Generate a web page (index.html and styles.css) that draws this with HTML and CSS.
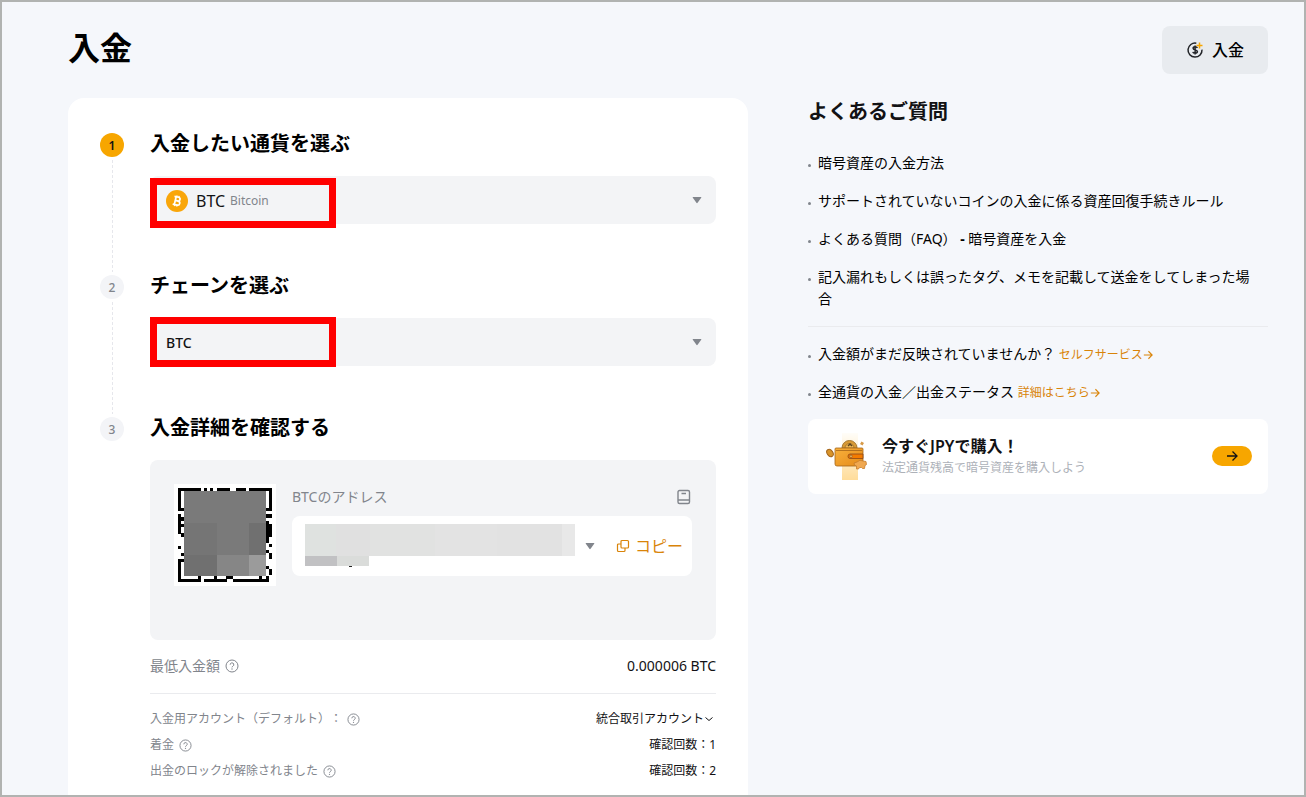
FILE: index.html
```html
<!DOCTYPE html>
<html lang="ja">
<head>
<meta charset="utf-8">
<title>入金</title>
<meta name="viewport" content="width=device-width, initial-scale=1">
<link rel="stylesheet" href="styles.css">
</head>
<body>
<svg class="defs" aria-hidden="true">
  <symbol id="help" viewBox="0 0 14 14"><g fill="none" stroke="currentColor"><circle cx="7" cy="7" r="6"/><path d="M5.2 5.7a1.8 1.8 0 1 1 2.7 1.5c-.6.4-.9.6-.9 1.2"/></g><circle cx="7" cy="10" r=".7" fill="currentColor"/></symbol>
  <symbol id="arrow" viewBox="0 0 12 12"><path d="M1 6h10M6.500 1.500 11 6l-4.500 4.500" fill="none" stroke="currentColor" stroke-width="1.300"/></symbol>
  <symbol id="caret" viewBox="0 0 10 8"><path d="M1.200 1h7.600q.9 0 .4.800L5.600 6.800q-.6.700-1.200 0L.8 1.800Q.3 1 1.200 1Z" fill="currentColor"/></symbol>
</svg>
<header class="header">
  <h1 class="title">入金</h1>
  <button class="deposit" type="button">
    <svg width="18" height="18" viewBox="0 0 18 18" fill="none" stroke="#222428" stroke-width="1.500"><path d="M10.300 2.200A7 7 0 1 0 16 8.600"/><path d="M11.300 6.900C11 6 10.200 5.800 9.100 5.800c-1.300 0-2 .6-2 1.500 0 2.200 4.300 1 4.300 3.300 0 1-.9 1.600-2.200 1.600S7 11.700 6.800 10.800M9.100 4.500v9"/><path d="M13.500 1.500v6M10.500 4.500h6" stroke="#f7a600"/></svg>
    <span>入金</span>
  </button>
</header>
<div class="layout">
  <main class="card">
    <section class="step">
      <div class="rail"><span class="num num-on">1</span></div>
      <div class="body">
        <h2 class="heading"><label for="coin">入金したい通貨を選ぶ</label></h2>
        <div class="field">
          <svg width="22" height="22" viewBox="0 0 22 22"><circle cx="11" cy="11" r="11" fill="#f9a60a"/><g transform="rotate(13 11 11)" fill="none" stroke="#fff" stroke-width="1.700"><path d="M7.500 7h4.200a1.900 1.900 0 0 1 0 3.800H9.200h2.900a2.100 2.100 0 0 1 0 4.200H7.500M9.200 7v8"/><path d="M9.800 5.400v2M12 5.400v2M9.800 14.600v2M12 14.600v2" stroke-width="1.200"/></g></svg>
          <select class="select coin" id="coin"><option>BTC</option></select>
          <span class="coin-name">Bitcoin</span>
          <svg class="caret" width="10" height="8"><use href="#caret"/></svg>
          <span class="mark mark-coin"></span>
        </div>
      </div>
    </section>
    <section class="step">
      <div class="rail"><span class="num">2</span></div>
      <div class="body">
        <h2 class="heading"><label for="chain">チェーンを選ぶ</label></h2>
        <div class="field">
          <select class="select chain" id="chain"><option>BTC</option></select>
          <svg class="caret" width="10" height="8"><use href="#caret"/></svg>
          <span class="mark mark-chain"></span>
        </div>
      </div>
    </section>
    <section class="step last">
      <div class="rail"><span class="num">3</span></div>
      <div class="body">
        <h2 class="heading">入金詳細を確認する</h2>
        <div class="panel">
          <svg width="102" height="102" viewBox="0 0 102 102" shape-rendering="crispEdges">
            <path fill="#fff" d="M0 0h102v102H0z"/>
            <path d="M4 4h23v3H4zM30 4h3v3h-3zM36 4h3v3h-3zM43 4h13v3H43zM62 4h10v3H62zM75 4h23v3H75zM4 4h3v23H4zM4 24h6v3H4zM95 4h3v23h-3zM91 24h7v3h-7z"/>
            <path d="M4 30h3v20H4zM7 33h3v4H7zM7 40h3v3H7zM7 49h3v4H7zM4 62h3v3H4zM7 69h3v3H7zM4 75h3v23H4zM4 75h6v3H4zM4 95h23v3H4zM24 92h3v3h-3zM30 95h23v3H30zM40 92h3v3h-3zM52 92h7v3h-7zM59 95h36v3H59zM85 92h3v3h-3zM92 92h3v3h-3z"/>
            <path d="M92 30h6v4h-6zM92 37h3v3h-3zM92 40h6v13h-6zM92 53h3v6h-3zM95 60h3v3h-3zM92 66h3v3h-3zM95 69h3v6h-3zM92 82h3v3h-3zM95 85h3v6h-3z"/>
            <path fill="#7a7a7a" d="M10 7h82v85H10z"/><path fill="#757575" d="M10 39h33v32H10z"/><path fill="#707070" d="M75 39h17v32H75zM10 71h33v21H10z"/><path fill="#868686" d="M43 71h32v21H43z"/><path fill="#9b9b9b" d="M75 71h17v21H75z"/>
          </svg>
          <div class="address">
            <div class="address-head">
              <span>BTCのアドレス</span>
              <button class="plain" type="button" aria-label="アドレス帳"><svg width="16" height="16" viewBox="0 0 16 16" fill="none" stroke="#81858c" stroke-width="1.400"><rect x="2" y="1.500" width="11.500" height="13" rx="1.500"/><path d="M2 11h11.500M5.500 4.500h4.500"/></svg></button>
            </div>
            <div class="address-box">
              <svg class="masked" width="270" height="44" viewBox="0 1 270 44" shape-rendering="crispEdges"><path fill="#e3e3e3" d="M0 1h257v32H0z"/><path fill="#dfe2e0" d="M0 1h31v32H0z"/><path fill="#e0e0e0" d="M31 1h34v32H31z"/><path fill="#e1e2e1" d="M65 1h65v32H65z"/><path fill="#e2e2e2" d="M192 1h65v32h-65z"/><path fill="#e8e8e8" d="M257 1h13v32h-13z"/><path fill="#c1c1c3" d="M0 33h32v10H0z"/><path fill="#dadcda" d="M32 33h32v10H32z"/><path fill="#222" d="M44 43h3v1h-3z"/></svg>
              <button class="plain" type="button" aria-label="アドレスを選択"><svg class="caret" width="10" height="8"><use href="#caret"/></svg></button>
              <button class="copy" type="button"><svg width="14" height="14" viewBox="0 0 14 14" fill="none" stroke="currentColor" stroke-width="1.200"><rect x="5" y="1.500" width="7.500" height="7.500" rx="1"/><path d="M5 5H2.500q-1 0-1 1v5.500q0 1 1 1H8q1 0 1-1V9"/></svg><span>コピー</span></button>
            </div>
          </div>
        </div>
        <div class="row minimum"><span class="term">最低入金額<svg width="14" height="14"><use href="#help"/></svg></span><span>0.000006 BTC</span></div>
        <div class="details">
          <div class="row"><span class="term">入金用アカウント（デフォルト）：<svg width="13" height="13"><use href="#help"/></svg></span><button class="account" type="button">統合取引アカウント<svg width="10" height="10" viewBox="0 0 10 10" fill="none" stroke="currentColor"><path d="m1.500 3.500 3.500 3 3.500-3"/></svg></button></div>
          <div class="row"><span class="term">着金<svg width="13" height="13"><use href="#help"/></svg></span><span>確認回数：1</span></div>
          <div class="row"><span class="term">出金のロックが解除されました<svg width="13" height="13"><use href="#help"/></svg></span><span>確認回数：2</span></div>
        </div>
      </div>
    </section>
  </main>
  <aside class="aside">
    <h2 class="heading faq">よくあるご質問</h2>
    <ul class="list">
      <li><a href="#">暗号資産の入金方法</a></li>
      <li><a href="#">サポートされていないコインの入金に係る資産回復手続きルール</a></li>
      <li><a href="#">よくある質問（FAQ） <b>-</b> 暗号資産を入金</a></li>
      <li><a href="#">記入漏れもしくは誤ったタグ、メモを記載して送金をしてしまった場合</a></li>
    </ul>
    <ul class="list support">
      <li>入金額がまだ反映されていませんか？ <a class="more" href="#">セルフサービス<svg width="10" height="10"><use href="#arrow"/></svg></a></li>
      <li>全通貨の入金／出金ステータス <a class="more" href="#">詳細はこちら<svg width="10" height="10"><use href="#arrow"/></svg></a></li>
    </ul>
    <div class="promo">
      <svg width="42" height="48" viewBox="0 0 42 48">
        <defs><linearGradient id="beam" x1="0" y1="0" x2="0" y2="1"><stop stop-color="#fffdf8"/><stop offset="1" stop-color="#ffdc9a"/></linearGradient><linearGradient id="gold" x1="0" y1="0" x2="1" y2="1"><stop stop-color="#f8b13c"/><stop offset="1" stop-color="#e58a1a"/></linearGradient></defs>
        <path d="M16 1h16v47H16z" fill="url(#beam)"/>
        <path d="M16 16a7.500 7.500 0 0 1 15 0Z" fill="#d99a35" stroke="#a5782f"/><path d="M19 16a4 4 0 0 1 9 0Z" fill="#efb754" stroke="#a5782f"/><path d="m22 14 2-2 2 2" fill="none" stroke="#5b431c" stroke-width="1.500"/>
        <path d="M10 16h26q1 0 1 1v15q0 2-2 2H11q-2 0-2-2V17q0-1 1-1Z" fill="url(#gold)" stroke="#a56419" stroke-width=".8"/><path d="M10 18.500h26" stroke="#a56419" stroke-width=".8"/>
        <path d="M24 22h13v4.500H24q-2 0-2-2.200t2-2.300Z" fill="#f47b00" stroke="#894819" stroke-width=".8"/><circle cx="25" cy="24.300" r="1.200" fill="#ffd178" stroke="#704319" stroke-width=".6"/>
        <ellipse cx="4" cy="21" rx="2.800" ry="4" fill="#d9942a" stroke="#a4651a" transform="rotate(-35 4 21)"/>
        <path d="m34 12 1.500-2.500L38 11l-1.500 2.500Z" fill="#d79a48"/>
        <path d="m28 31 3-1q3-3 6-1l3 .5.5 3-1.500 1-.5 3h-2l-1-1h-2l-1 1.500h-2V34l-2-1Z" fill="#f0a850" stroke="#c67d2c" stroke-width=".8"/>
      </svg>
      <div class="promo-text"><strong>今すぐJPYで購入！</strong><span>法定通貨残高で暗号資産を購入しよう</span></div>
      <button class="go" type="button" aria-label="購入する"><svg width="12" height="12"><use href="#arrow"/></svg></button>
    </div>
  </aside>
</div>
</body>
</html>
```
FILE: styles.css
```css
* { box-sizing: border-box; }
body {
  margin: 0;
  min-height: 100vh;
  display: flex;
  flex-direction: column;
  gap: 24px;
  padding: 24px 36px 0 66px;
  border: 2px solid #b1b3b1;
  background: #f5f7fb;
  color: #121214;
  font: 14px/22px "Noto Sans", "Noto Sans CJK JP", sans-serif;
  text-spacing-trim: space-all;
}
h1, h2, ul { margin: 0; padding: 0; }
button, select { font: inherit; color: inherit; border: 0; padding: 0; background: none; cursor: pointer; }
a { color: inherit; text-decoration: none; }
svg { flex: none; display: block; }
.defs { position: absolute; width: 0; height: 0; }
.header { display: flex; justify-content: space-between; align-items: flex-start; }
.title { font-size: 32px; line-height: 44px; color: #000; }
.deposit {
  display: flex; align-items: center; gap: 8px;
  height: 48px; padding: 0 24px;
  border-radius: 8px; background: #e8ebef;
  font-size: 16px; font-weight: 500; color: #000;
}
.layout { flex: 1; display: grid; grid-template-columns: minmax(0, 1fr) 460px; gap: 60px; }
.card { padding: 32px 32px 11px; border-radius: 16px 16px 0 0; background: #fff; }
.step { display: grid; grid-template-columns: 24px minmax(0, 1fr); gap: 26px; }
.body { padding-bottom: 48px; }
.last .body { padding-bottom: 0; }
.rail { display: flex; flex-direction: column; align-items: center; gap: 3px; padding-top: 3px; }
.rail::after {
  content: ""; flex: 1; width: 1px;
  background: repeating-linear-gradient(#e6e7ec 0 3px, transparent 3px 5px);
}
.last .rail::after { display: none; }
.num {
  display: grid; place-items: center;
  width: 24px; height: 24px; padding-top: 2px; border-radius: 50%;
  background: #f3f4f7; color: #81858c;
  font-size: 12px; font-weight: 500;
}
.num-on { background: #f7a600; color: #121214; font-weight: 600; }
.heading { margin-bottom: 18px; font-size: 20px; line-height: 28px; font-weight: 600; color: #000; }
.field {
  position: relative;
  display: flex; align-items: center;
  height: 48px; padding: 2px 14px 0 16px;
  border-radius: 8px; background: #f3f4f6;
}
.select { appearance: none; outline: 0; color: #121214; }
.coin { width: 30px; margin: 0 4px 0 8px; font-size: 16px; }
.chain { flex: 1; font-weight: 500; }
.coin-name { flex: 1; font-size: 12px; color: #81858c; }
.caret { color: #81858c; }
.field .caret { margin-bottom: 2px; }
.mark { position: absolute; left: 0; width: 186px; height: 50px; border: 7px solid #f00; pointer-events: none; }
.mark-coin { top: 2px; }
.mark-chain { top: -1px; }
.panel { display: flex; align-items: flex-start; gap: 16px; min-height: 180px; padding: 24px; border-radius: 8px; background: #f3f4f6; }
.address { flex: 1; min-width: 0; }
.address-head { display: flex; align-items: center; justify-content: space-between; height: 24px; margin-bottom: 8px; padding-top: 2px; color: #81858c; }
.address-box { display: flex; align-items: center; height: 60px; padding: 0 9px 0 13px; border-radius: 8px; background: #fff; }
.masked { margin-right: 10px; }
.copy { display: flex; align-items: center; gap: 5px; margin-left: auto; color: #d98409; font-size: 16px; }
.row { display: flex; justify-content: space-between; align-items: center; line-height: 26px; }
.term { display: flex; align-items: center; color: #81858c; gap: 5px; }
.minimum { padding: 13px 0 14px; border-bottom: 1px solid #eaebee; }
.details { padding-top: 12px; font-size: 12px; }
.account { display: flex; align-items: center; padding-right: 2px; }
.faq { margin-bottom: 26px; color: #121214; }
.list { display: grid; gap: 16px; list-style: none; }
.list li { position: relative; padding: 0 10px; color: #000; }
.list li::before {
  content: ""; position: absolute; left: 0; top: 12px;
  width: 3px; height: 3px; border-radius: 50%; background: #81858c;
}
.support { margin-top: 16px; padding: 16px 0; border-top: 1px solid #eaebee; }
.more { display: inline-flex; align-items: center; color: #d98409; font-size: 12px; line-height: 18px; }
.promo { display: flex; align-items: center; padding: 13px 16px 14px 18px; border-radius: 8px; background: #fff; }
.promo-text { flex: 1; display: grid; margin-left: 14px; font-size: 12px; line-height: 20px; color: #adb1b8; }
.promo-text strong { font-size: 16px; line-height: 24px; font-weight: 600; color: #121214; }
.go { display: grid; place-items: center; width: 40px; height: 20px; border-radius: 10px; background: #f7a600; color: #121214; }
```
